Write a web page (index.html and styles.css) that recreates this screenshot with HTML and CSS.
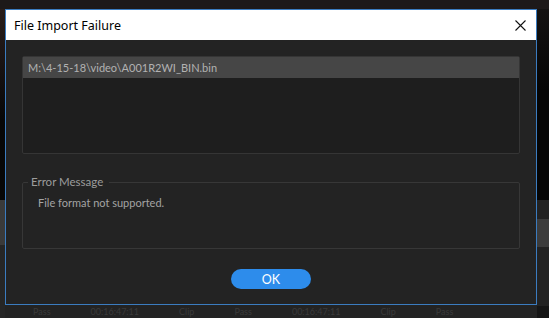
FILE: index.html
```html
<!DOCTYPE html>
<html lang="en">
<head>
  <meta charset="UTF-8">
  <meta name="viewport" content="width=device-width, initial-scale=1.0">
  <title>File Import Failure</title>
  <link rel="stylesheet" href="styles.css">
</head>
<body>

  <div class="dialog">
    <div class="titlebar">
      <span class="title">File Import Failure</span>
      <button class="close" aria-label="Close">
        <svg width="11" height="11" viewBox="0 0 11 11">
          <path d="M0.5 0.5 L10.5 10.5 M10.5 0.5 L0.5 10.5" stroke="#111" stroke-width="1.1" fill="none"/>
        </svg>
      </button>
    </div>

    <div class="content">
      <ul class="file-list">
        <li class="selected">M:\4-15-18\video\A001R2WI_BIN.bin</li>
      </ul>

      <fieldset class="error-box">
        <legend>Error Message</legend>
        <p>File format not supported.</p>
      </fieldset>

      <div class="actions">
        <button class="ok">OK</button>
      </div>
    </div>
  </div>

  <div class="backdrop-row">
    <span>Pass</span><span>00:16:47:11</span><span>Clip</span><span>Pass</span><span>00:16:47:11</span><span>Clip</span><span>Pass</span>
  </div>

</body>
</html>
```

FILE: styles.css
```css
/* Page behind the dialog */
html, body {
  height: 100%;
}

body {
  margin: 0;
  padding: 9px 0 0 5px;
  box-sizing: border-box;
  overflow: hidden;
  font-family: Lato, "Liberation Sans", sans-serif;
  background-color: #232323;
  background-image:
    linear-gradient(#1d1919, #1d1919),
    linear-gradient(to bottom, #2b1f1b 0, #1a1414 60px, #070707 120px, #070707 200px, #3a3a3a 200px, #3a3a3a 245px, #262626 245px),
    linear-gradient(to bottom, #161414 0, #050505 90px, #050505 200px, #222 200px, #222 219px, #3c3c3c 219px, #3c3c3c 247px, #222 247px, #222 306px, #151515 306px);
  background-size: 100% 9px, 5px 100%, 12px 100%;
  background-position: left top, left top, right top;
  background-repeat: no-repeat;
}

/* Dialog window */
.dialog {
  width: 530px;
  height: 294px;
  border: 1px solid #3b7cc0;
  background: #232323;
  display: flex;
  flex-direction: column;
}

.titlebar {
  height: 30px;
  background: #fff;
  display: flex;
  align-items: center;
  justify-content: space-between;
  padding: 0 10px 0 8px;
  flex-shrink: 0;
}

.title {
  font-family: "Noto Sans", "Open Sans", sans-serif;
  font-size: 12.5px;
  color: #000;
  padding-top: 1px;
}

.close {
  border: none;
  background: none;
  padding: 0;
  width: 11px;
  height: 11px;
  display: flex;
}

.content {
  flex: 1;
  padding: 16px 16px 15px;
  display: flex;
  flex-direction: column;
}

/* File list */
.file-list {
  list-style: none;
  margin: 0;
  padding: 0;
  height: 96px;
  border: 1px solid #353535;
  border-radius: 2px;
  background: #1e1e1e;
}

.file-list li {
  height: 21px;
  line-height: 21px;
  padding-left: 5px;
  font-size: 11px;
  color: #b2b2b2;
}

.file-list .selected {
  background: #464646;
}

/* Error message box */
.error-box {
  margin: 21px 0 0;
  padding: 6px 15px 0;
  height: 66px;
  border: 1px solid #373737;
  border-radius: 2px;
}

.error-box legend {
  margin-left: -10px;
  padding: 0 6px 0 3px;
  font-size: 11.5px;
  line-height: 14px;
  color: #9c9c9c;
}

.error-box p {
  margin: 0;
  font-size: 11px;
  line-height: 16px;
  color: #a4a4a4;
}

/* Buttons */
.actions {
  margin-top: auto;
  display: flex;
  justify-content: center;
}

.ok {
  width: 80px;
  height: 20px;
  border: none;
  border-radius: 10px;
  background: #2d8ceb;
  color: #fff;
  font-family: Lato, "Liberation Sans", sans-serif;
  font-size: 12.5px;
  padding: 0;
}

.backdrop-row {
  display: flex;
  gap: 40px;
  padding: 1px 0 0 28px;
  font-size: 9px;
  line-height: 11px;
  color: #3a3a3a;
  white-space: nowrap;
}
```
